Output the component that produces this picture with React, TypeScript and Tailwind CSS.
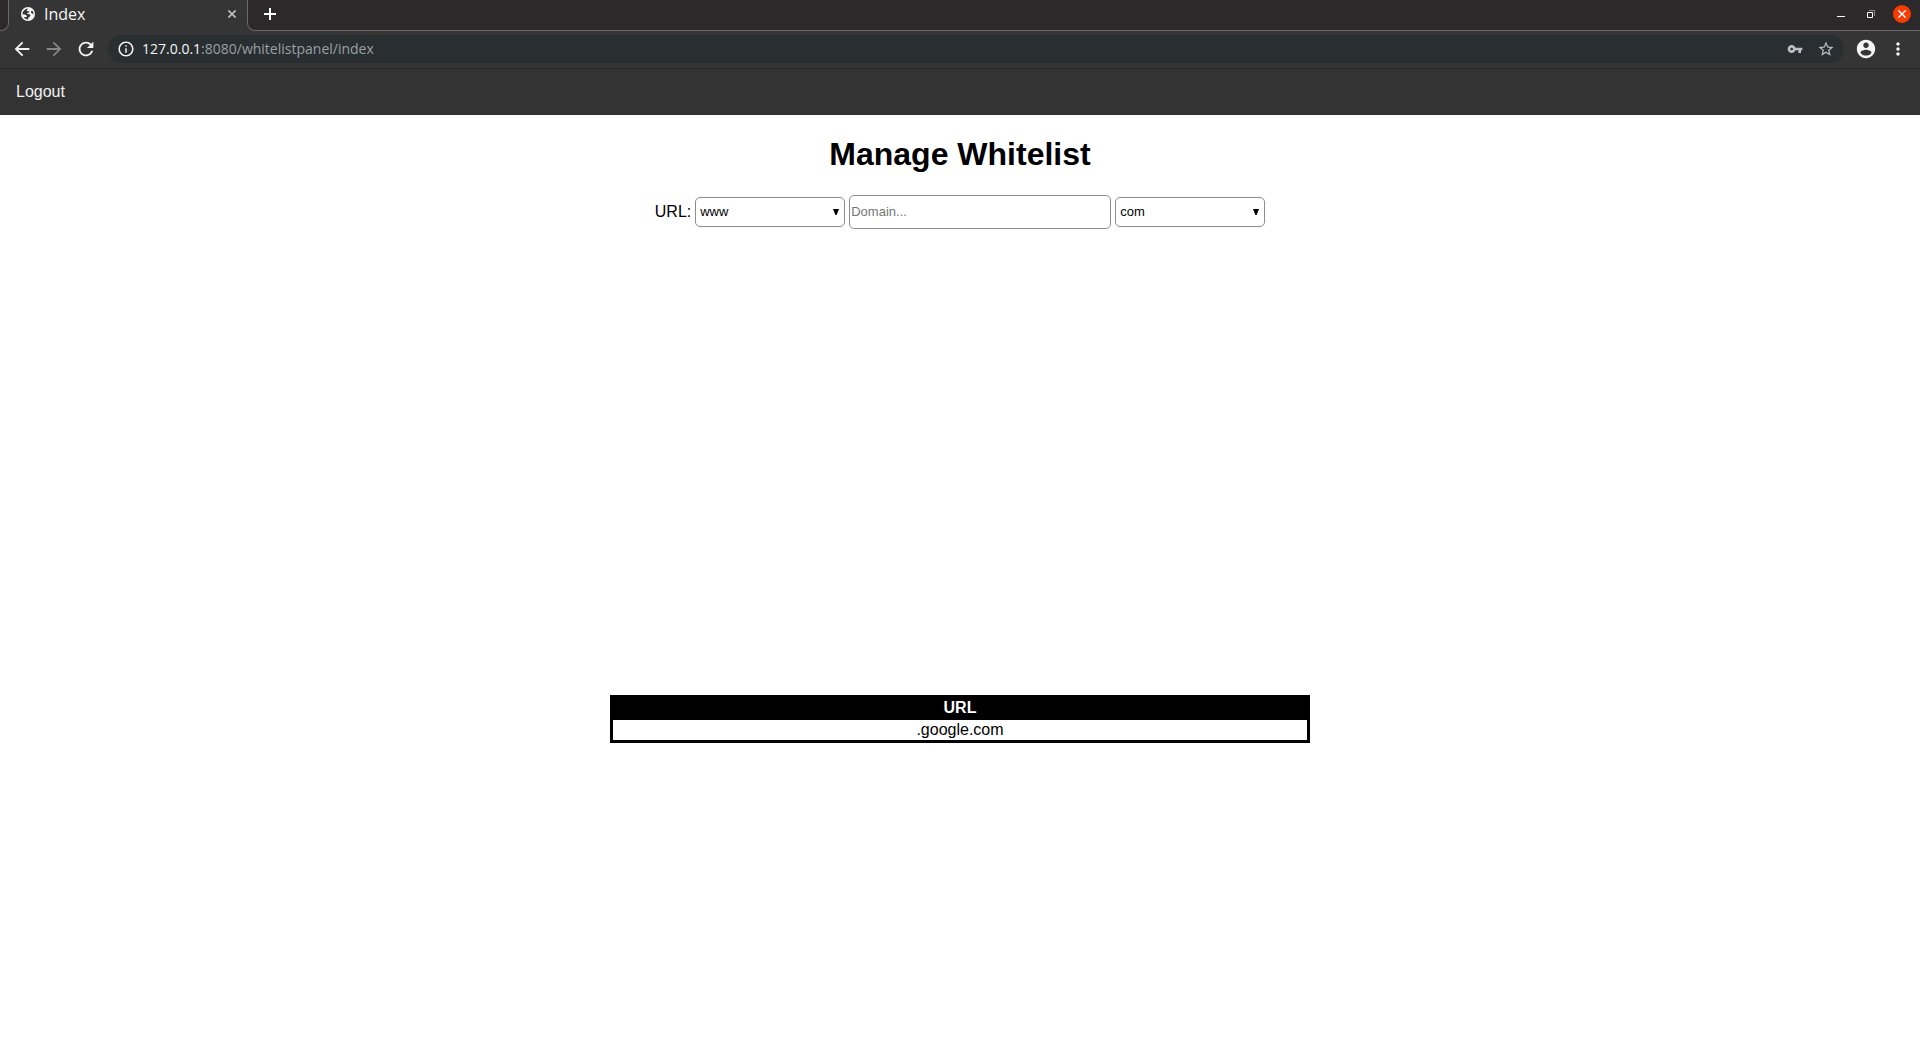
import React, { useState } from "react";

type IconProps = { d: string; className: string };

function Icon({ d, className }: IconProps) {
  return (
    <svg viewBox="0 0 24 24" fill="currentColor" aria-hidden="true" className={className}>
      <path d={d} />
    </svg>
  );
}

const PATHS = {
  back: "M20 11H7.83l5.59-5.59L12 4l-8 8 8 8 1.41-1.41L7.83 13H20v-2z",
  forward: "M12 4l-1.41 1.41L16.17 11H4v2h12.17l-5.58 5.59L12 20l8-8z",
  reload:
    "M17.65 6.35C16.2 4.9 14.21 4 12 4c-4.42 0-7.99 3.58-7.99 8s3.57 8 7.99 8c3.73 0 6.84-2.55 7.73-6h-2.08c-.82 2.33-3.04 4-5.65 4-3.31 0-6-2.69-6-6s2.69-6 6-6c1.66 0 3.14.69 4.22 1.78L13 11h7V4l-2.35 2.35z",
  info: "M11 7h2v2h-2zm0 4h2v6h-2zm1-9C6.48 2 2 6.48 2 12s4.48 10 10 10 10-4.48 10-10S17.52 2 12 2zm0 18c-4.41 0-8-3.59-8-8s3.59-8 8-8 8 3.59 8 8-3.59 8-8 8z",
  key: "M12.65 10C11.83 7.67 9.61 6 7 6c-3.31 0-6 2.69-6 6s2.69 6 6 6c2.61 0 4.83-1.67 5.65-4H17v4h4v-4h2v-4H12.65zM7 14c-1.1 0-2-.9-2-2s.9-2 2-2 2 .9 2 2-.9 2-2 2z",
  star: "M22 9.24l-7.19-.62L12 2 9.19 8.63 2 9.24l5.46 4.73L5.82 21 12 17.27 18.18 21l-1.63-7.03L22 9.24zM12 15.4l-3.76 2.27 1-4.28-3.32-2.88 4.38-.38L12 6.1l1.71 4.04 4.38.38-3.32 2.88 1 4.28L12 15.4z",
  account:
    "M12 2C6.48 2 2 6.48 2 12s4.48 10 10 10 10-4.48 10-10S17.52 2 12 2zm0 3c1.66 0 3 1.34 3 3s-1.34 3-3 3-3-1.34-3-3 1.34-3 3-3zm0 14.2c-2.5 0-4.71-1.28-6-3.22.03-1.99 4-3.08 6-3.08 1.99 0 5.97 1.09 6 3.08-1.29 1.94-3.5 3.22-6 3.22z",
  more: "M12 8c1.1 0 2-.9 2-2s-.9-2-2-2-2 .9-2 2 .9 2 2 2zm0 2c-1.1 0-2 .9-2 2s.9 2 2 2 2-.9 2-2-.9-2-2-2zm0 6c-1.1 0-2 .9-2 2s.9 2 2 2 2-.9 2-2-.9-2-2-2z",
};

function TabStrip() {
  return (
    <div className="flex h-[31px] bg-[#353535]">
      <div className="w-[9px] rounded-br-lg border-r border-b border-[#6b6969] bg-[#2c292a]" />
      <div className="flex w-[238px] items-center pr-[7px] pb-[3px] pl-3">
        <svg viewBox="0 0 14 14" className="size-[14px]" aria-hidden="true">
          <circle cx="7" cy="7" r="7" fill="#f5f5f5" />
          <path
            d="M7.4 1.500 5.600 3.300 6.500 4.300 8.300 4.200 8.400 5.300 6.300 6.100 6.500 7 8.700 7.200 9.500 8.600 8.300 10.200 7.400 10.600 7 12.400C5 12.400 3.500 11.300 2.500 10L5.200 10.200 6 9.100 4.600 7.800 1.500 7.200C1.400 4.500 4 1.600 7.400 1.500ZM10.200 3.900 11.400 3.800 12.500 6 12.400 7.200 11.200 6.400 9.900 5.400Z"
            fill="#353535"
          />
        </svg>
        <span className="ml-[9px] flex-1 text-base leading-5 text-[#f5f5f5]">Index</span>
        <button type="button" aria-label="Close tab" className="flex size-4 items-center justify-center text-[#c0c0c0]">
          <svg viewBox="0 0 8 8" className="size-2" stroke="currentColor" strokeWidth="1.6" aria-hidden="true">
            <path d="M.4.4l7.200 7.200M7.600.4L.4 7.600" />
          </svg>
        </button>
      </div>
      <div className="flex flex-1 items-center rounded-bl-lg border-b border-l border-[#6b6969] bg-[#2c292a] pr-[9px] pb-0.5 pl-3.5 text-white">
        <button type="button" aria-label="New tab" className="flex size-4 items-center justify-center">
          <svg viewBox="0 0 12 12" className="size-3" stroke="currentColor" strokeWidth="2" aria-hidden="true">
            <path d="M6 0v12M0 6h12" />
          </svg>
        </button>
        <div className="ml-auto flex items-center gap-3.5">
          <button type="button" aria-label="Minimize" className="flex size-4 items-center justify-center">
            <svg viewBox="0 0 8 8" className="size-2" aria-hidden="true">
              <path d="M0 6h8v1H0z" fill="currentColor" />
            </svg>
          </button>
          <button type="button" aria-label="Restore" className="flex size-4 items-center justify-center">
            <svg viewBox="0 0 8 8" className="size-2" fill="none" aria-hidden="true">
              <path d="M2 .5h5.500V6" stroke="#8a8888" />
              <path d="M.5 2.500h5v5h-5z" stroke="currentColor" />
            </svg>
          </button>
          <button type="button" aria-label="Close" className="flex size-[18px] items-center justify-center rounded-full bg-[#f63c02]">
            <svg viewBox="0 0 8 8" className="size-2" stroke="currentColor" strokeWidth="1.4" aria-hidden="true">
              <path d="M.4.4l7.200 7.200M7.600.4L.4 7.600" />
            </svg>
          </button>
        </div>
      </div>
    </div>
  );
}

function Toolbar() {
  return (
    <div className="flex h-[38px] items-center border-b border-[#292929] bg-[#353535] pr-3 pb-px pl-[11px] text-[#f5f5f5]">
      <div className="flex gap-2.5">
        <button type="button" aria-label="Back" className="size-[22px]">
          <Icon d={PATHS.back} className="size-[22px]" />
        </button>
        <button type="button" aria-label="Forward" className="size-[22px] text-[#858585]">
          <Icon d={PATHS.forward} className="size-[22px]" />
        </button>
        <button type="button" aria-label="Reload" className="size-[22px]">
          <Icon d={PATHS.reload} className="size-[22px]" />
        </button>
      </div>
      <div className="ml-[11px] flex h-7 flex-1 items-center rounded-full bg-[#292e30] pr-[9px] pl-[9px]">
        <Icon d={PATHS.info} className="size-[18px]" />
        <a href="#address" className="ml-[7px] flex-1 font-['Open_Sans','Noto_Sans',sans-serif] text-sm leading-5 text-[#9aa0a6]">
          <span className="text-[#f5f5f5]">127.0.0.1</span>:8080/whitelistpanel/index
        </a>
        <div className="flex items-center gap-3.5 text-[#bdc1c6]">
          <button type="button" aria-label="Saved passwords" className="size-4">
            <Icon d={PATHS.key} className="size-4" />
          </button>
          <button type="button" aria-label="Bookmark this page" className="size-[18px]">
            <Icon d={PATHS.star} className="size-[18px]" />
          </button>
        </div>
      </div>
      <button type="button" aria-label="Profile" className="ml-[11px] size-[22px]">
        <Icon d={PATHS.account} className="size-[22px]" />
      </button>
      <button type="button" aria-label="Menu" className="ml-[11px] size-5">
        <Icon d={PATHS.more} className="size-5" />
      </button>
    </div>
  );
}

function Dropdown({ id, label, options }: { id: string; label: string; options: string[] }) {
  return (
    <div className="relative">
      <select
        id={id}
        aria-label={label}
        className="block h-[30px] w-[150px] appearance-none rounded-[5px] border border-[#8c8c8c] bg-white px-1 text-[13px] text-black"
      >
        {options.map((o) => (
          <option key={o}>{o}</option>
        ))}
      </select>
      <svg viewBox="0 0 6 6" className="pointer-events-none absolute top-3 right-1.5 size-1.5" aria-hidden="true">
        <path d="M0 0h6L3.600 6H2.400z" />
      </svg>
    </div>
  );
}

export default function App() {
  const [domain, setDomain] = useState("");
  return (
    <div className="min-h-screen bg-white font-['Liberation_Sans',Arial,sans-serif] text-base text-black">
      <header className="font-['Open_Sans','Noto_Sans',sans-serif]">
        <TabStrip />
        <Toolbar />
      </header>
      <nav className="flex bg-[#333333]">
        <a href="#logout" className="px-4 py-3.5 leading-[18px] text-[#f2f2f2]">
          Logout
        </a>
      </nav>
      <main className="flex flex-col items-center">
        <h1 className="mt-[21px] text-[32px] leading-9 font-bold">Manage Whitelist</h1>
        <form className="mt-[23px] flex items-center gap-1" onSubmit={(e) => e.preventDefault()}>
          <label htmlFor="domain">URL:</label>
          <Dropdown id="prefix" label="Prefix" options={["www", "none"]} />
          <input
            id="domain"
            type="text"
            value={domain}
            onChange={(e) => setDomain(e.target.value)}
            placeholder="Domain..."
            className="h-[34px] w-[262px] rounded-[5px] border border-[#8c8c8c] px-px pb-0.5 text-[13px] placeholder:text-[#757575]"
          />
          <Dropdown id="suffix" label="Suffix" options={["com", "org", "net"]} />
        </form>
        <table className="mt-[466px] w-[700px] border-collapse border-[3px] border-black text-center">
          <thead>
            <tr className="bg-black text-white">
              <th className="p-0 pb-0.5 leading-5 font-bold">URL</th>
            </tr>
          </thead>
          <tbody>
            <tr>
              <td className="p-0 leading-5">.google.com</td>
            </tr>
          </tbody>
        </table>
      </main>
    </div>
  );
}
